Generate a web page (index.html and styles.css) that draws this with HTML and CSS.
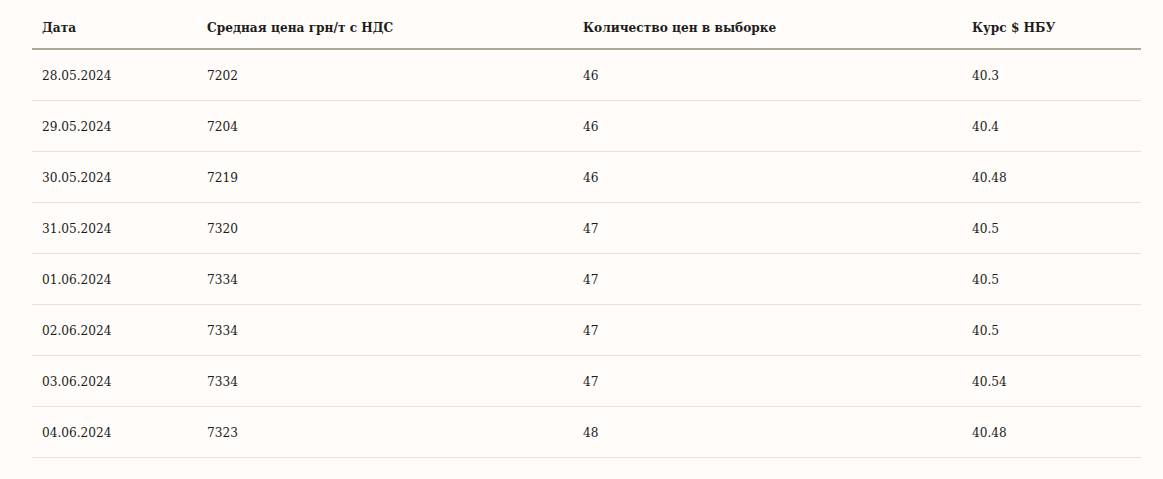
FILE: index.html
```html
<!DOCTYPE html>
<html lang="ru">
<head>
<meta charset="utf-8">
<title>Цены</title>
<link rel="stylesheet" href="styles.css">
</head>
<body>
<div class="wrap">
<table class="prices">
<colgroup>
<col class="c1"><col class="c2"><col class="c3"><col class="c4">
</colgroup>
<thead>
<tr><th>Дата</th><th>Средная цена грн/т с НДС</th><th>Количество цен в выборке</th><th>Курс $ НБУ</th></tr>
</thead>
<tbody>
<tr><td>28.05.2024</td><td>7202</td><td>46</td><td>40.3</td></tr>
<tr><td>29.05.2024</td><td>7204</td><td>46</td><td>40.4</td></tr>
<tr><td>30.05.2024</td><td>7219</td><td>46</td><td>40.48</td></tr>
<tr><td>31.05.2024</td><td>7320</td><td>47</td><td>40.5</td></tr>
<tr><td>01.06.2024</td><td>7334</td><td>47</td><td>40.5</td></tr>
<tr><td>02.06.2024</td><td>7334</td><td>47</td><td>40.5</td></tr>
<tr><td>03.06.2024</td><td>7334</td><td>47</td><td>40.54</td></tr>
<tr><td>04.06.2024</td><td>7323</td><td>48</td><td>40.48</td></tr>
</tbody>
</table>
</div>
</body>
</html>
```

FILE: styles.css
```css
html, body {
  margin: 0;
  padding: 0;
  background: #fffcf9;
}
.wrap {
  padding: 6px 22px 0 32px;
}
.prices {
  width: 1109px;
  border-collapse: collapse;
  table-layout: fixed;
  font-family: "DejaVu Serif Condensed", "DejaVu Serif", serif;
  font-size: 13.5px;
  color: #1c1c1c;
}
.c1 { width: 165px; }
.c2 { width: 376px; }
.c3 { width: 389px; }
.c4 { width: 179px; }
.prices th {
  text-align: left;
  font-weight: bold;
  line-height: 20px;
  padding: 11px 10px;
  border-bottom: 2px solid #a9aa97;
}
.prices td {
  line-height: 20px;
  padding: 15px 10px;
  border-bottom: 1px solid #e6e3dd;
}
```
